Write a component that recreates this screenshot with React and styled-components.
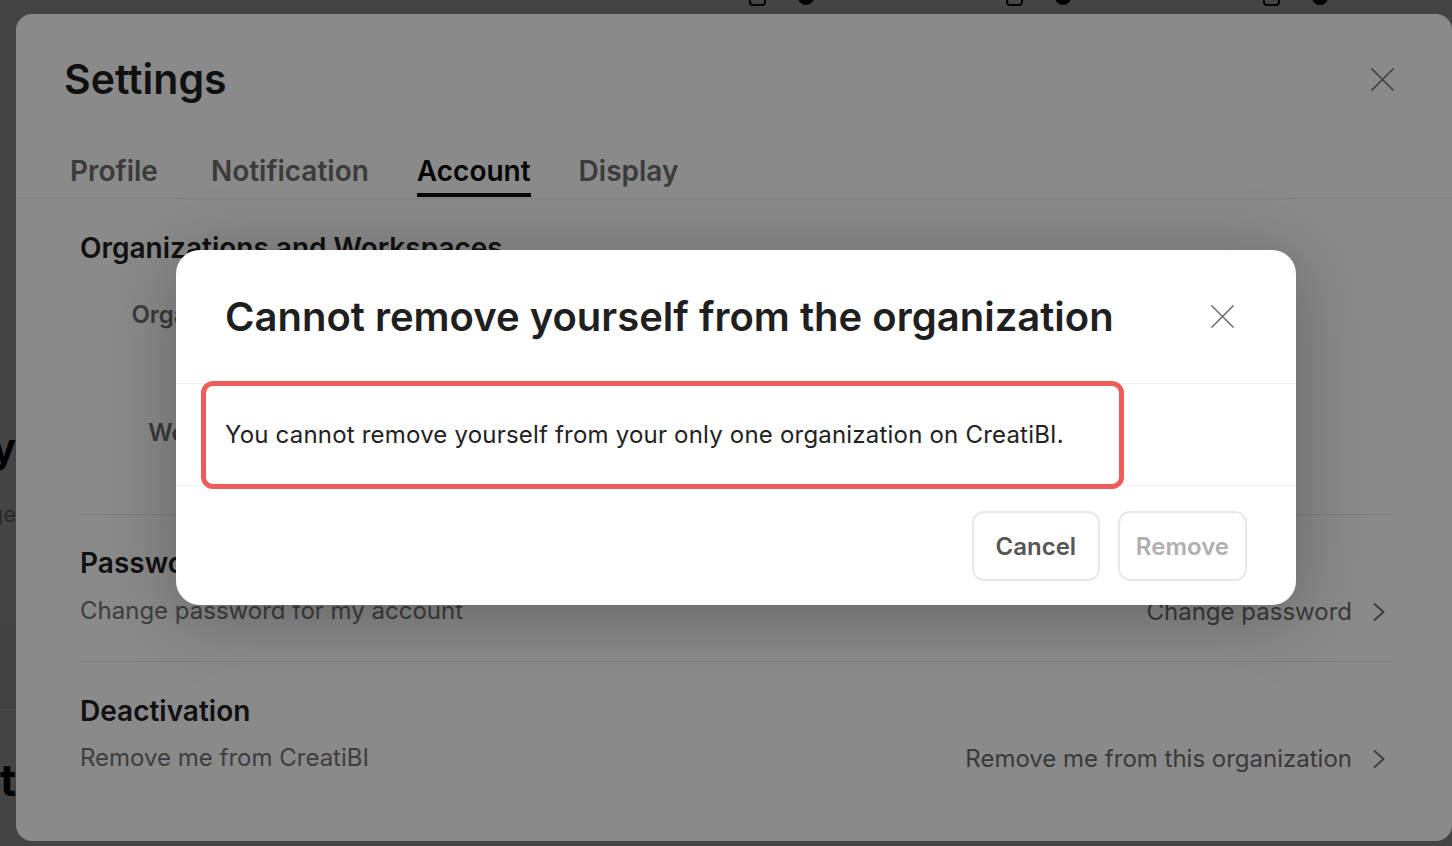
import React from "react";
import styled, { createGlobalStyle } from "styled-components";

const GlobalStyle = createGlobalStyle`
  * { box-sizing: border-box; }
  html, body { margin: 0; padding: 0; }
  body {
    font-family: Inter, "Noto Sans", "Liberation Sans", sans-serif;
    background: #fff;
    -webkit-font-smoothing: antialiased;
  }
`;

const Screen = styled.div`
  position: relative;
  width: 100vw;
  height: 100vh;
  overflow: hidden;
  background: #fff;
`;

/* ---------- app behind the settings window ---------- */

const BackApp = styled.div`
  display: flex;
  flex-direction: column;
  height: 100%;
`;

const TopBar = styled.div`
  display: flex;
  gap: 192px;
  height: 20px;
  margin-top: -13px;
  padding-left: 749px;
`;

const TopGroup = styled.div`
  display: flex;
  align-items: center;
  gap: 32px;
`;

const SquareIcon = styled.span`
  width: 17px;
  height: 17px;
  border: 2px solid #111;
  border-radius: 4px;
`;

const Avatar = styled.span`
  width: 16px;
  height: 16px;
  border-radius: 50%;
  background: #111;
`;

const SideColumn = styled.div`
  width: 16px;
  overflow: hidden;
  display: flex;
  flex-direction: column;
  padding-top: 417px;
`;

const BackLine = styled.div`
  display: flex;
  justify-content: flex-end;
  white-space: nowrap;
  font-size: ${(p) => p.$size}px;
  font-weight: ${(p) => p.$weight};
  color: ${(p) => p.$color};
  line-height: ${(p) => p.$lh}px;
  margin-top: ${(p) => p.$mt || 0}px;
`;

const BackBand = styled.div`
  height: 84px;
  margin-top: 96px;
  background: #f0f0f0;
  border-bottom: 1px solid #d6d6d6;
`;

/* ---------- overlays ---------- */

const Scrim = styled.div`
  position: absolute;
  inset: 0;
  background: rgba(0, 0, 0, ${(p) => p.$alpha});
`;

const Layer = styled.div`
  position: absolute;
  inset: 0;
  padding: ${(p) => (p.$center ? "14px 0 5px 20px" : "14px 0 5px 16px")};
  display: flex;
  align-items: ${(p) => (p.$center ? "center" : "stretch")};
  justify-content: ${(p) => (p.$center ? "center" : "stretch")};
`;

/* ---------- settings panel ---------- */

const Panel = styled.div`
  flex: 1;
  background: #fff;
  border-radius: 16px;
  display: flex;
  flex-direction: column;
  overflow: hidden;
`;

const PanelHeader = styled.div`
  display: flex;
  align-items: center;
  justify-content: space-between;
  padding: 41px 50px 0 48px;
`;

const PanelTitle = styled.h1`
  margin: 0;
  font-size: 41px;
  line-height: 48px;
  font-weight: 600;
  color: #1f1f1f;
`;

const IconButton = styled.button`
  display: flex;
  align-items: center;
  justify-content: center;
  width: ${(p) => p.$box}px;
  height: ${(p) => p.$box}px;
  padding: 0;
  border: 0;
  background: none;
  color: ${(p) => p.$color};
  cursor: pointer;
`;

const Tabs = styled.nav`
  display: flex;
  gap: 48px;
  margin-top: 51px;
  padding: 0 0 1px 54px;
  border-bottom: 1px solid #ededed;
`;

const Tab = styled.span`
  font-size: 28px;
  line-height: 34px;
  font-weight: 600;
  padding-bottom: 5px;
  color: ${(p) => (p.$active ? "#0a0a0a" : "#6d6d6d")};
  border-bottom: 4px solid ${(p) => (p.$active ? "#0a0a0a" : "transparent")};

  &:first-child {
    margin-right: 5px;
  }
`;

const Content = styled.div`
  display: flex;
  flex-direction: column;
  padding: 0 60px 0 64px;
`;

const Section = styled.section`
  display: flex;
  flex-direction: column;
  padding: ${(p) => p.$pad};
  border-bottom: ${(p) => (p.$last ? "none" : "1px solid #e8e8e8")};
`;

const Heading = styled.h2`
  margin: 0;
  font-size: 28px;
  line-height: 34px;
  font-weight: 600;
  color: #202020;
`;

const FieldRow = styled.div`
  display: grid;
  grid-template-columns: 200px 1fr;
  gap: 32px;
  align-items: center;
  height: 88px;
  margin-top: ${(p) => p.$mt}px;
`;

const FieldLabel = styled.span`
  text-align: right;
  font-size: 24px;
  font-weight: 600;
  color: #6b6b6b;
`;

const FieldValue = styled.div`
  display: flex;
  align-items: center;
  gap: 14px;
  font-size: 22px;
  color: #333;
`;

const OrgBadge = styled.span`
  width: 44px;
  height: 44px;
  border-radius: 10px;
  background: #3b6cf6;
  color: #fff;
  display: flex;
  align-items: center;
  justify-content: center;
  font-weight: 700;
`;

const DescRow = styled.div`
  display: flex;
  align-items: center;
  justify-content: space-between;
  margin-top: ${(p) => p.$mt}px;
`;

const Desc = styled.span`
  font-size: 24px;
  line-height: 30px;
  color: #737373;
`;

const Action = styled.a`
  display: flex;
  align-items: center;
  gap: 16px;
  font-size: 24px;
  line-height: 30px;
  color: #6b6b6b;
  text-decoration: none;
  cursor: pointer;
  transform: translateY(1px);
`;

/* ---------- confirmation dialog ---------- */

const Dialog = styled.div`
  position: relative;
  width: 1120px;
  background: #fff;
  border-radius: 24px;
  box-shadow: 0 10px 70px rgba(0, 0, 0, 0.28);
  display: flex;
  flex-direction: column;
`;

const DialogHeader = styled.div`
  display: flex;
  align-items: center;
  justify-content: space-between;
  height: 134px;
  padding: 0 48px 0 49px;
  border-bottom: 1px solid #f0f0f0;
`;

const DialogTitle = styled.h2`
  margin: 0;
  font-size: 40px;
  line-height: 48px;
  font-weight: 600;
  color: #1f1f1f;
`;

const DialogBody = styled.div`
  display: flex;
  align-items: center;
  height: 102px;
  padding: 0 49px;
  border-bottom: 1px solid #f0f0f0;
  font-size: 24px;
  letter-spacing: 0.2px;
  color: #222;
`;

const DialogFooter = styled.div`
  display: flex;
  justify-content: flex-end;
  gap: 18px;
  padding: 25px 49px 24px;
`;

const Button = styled.button`
  min-width: 128px;
  height: 70px;
  padding: 0 16px;
  border: 2px solid #e8e8e8;
  border-radius: 12px;
  background: #fff;
  font-family: inherit;
  font-size: 24px;
  font-weight: 600;
  color: ${(p) => (p.disabled ? "#b0b0b0" : "#555")};
  cursor: ${(p) => (p.disabled ? "default" : "pointer")};
`;

const Highlight = styled.div`
  position: absolute;
  left: 25px;
  top: 131px;
  width: 923px;
  height: 108px;
  border: 5px solid #f05d58;
  border-radius: 12px;
  pointer-events: none;
`;

const CloseIcon = ({ size = 24, stroke = 1.6 }) => (
  <svg width={size} height={size} viewBox="0 0 24 24" fill="none">
    <path d="M1 1L23 23M23 1L1 23" stroke="currentColor" strokeWidth={stroke} strokeLinecap="square" />
  </svg>
);

const Chevron = () => (
  <svg width="24" height="24" viewBox="0 0 24 24" fill="none">
    <path d="M6.5 4L15.5 12L6.5 20" stroke="currentColor" strokeWidth="1.8" strokeLinecap="round" strokeLinejoin="round" />
  </svg>
);

const tabs = ["Profile", "Notification", "Account", "Display"];

export default function App() {
  return (
    <Screen>
      <GlobalStyle />

      <BackApp>
        <TopBar>
          {[0, 1, 2].map((i) => (
            <TopGroup key={i}>
              <SquareIcon />
              <Avatar />
            </TopGroup>
          ))}
        </TopBar>
        <SideColumn>
          <BackLine $size={40} $weight={700} $color="#000" $lh={48}>
            Company
          </BackLine>
          <BackLine $size={22} $weight={400} $color="#9b9b9b" $lh={28} $mt={28}>
            Manage
          </BackLine>
          <BackBand />
          <BackLine $size={44} $weight={700} $color="#000" $lh={52} $mt={46}>
            Audit
          </BackLine>
        </SideColumn>
      </BackApp>

      <Scrim $alpha={0.5} />

      <Layer>
        <Panel>
          <PanelHeader>
            <PanelTitle>Settings</PanelTitle>
            <IconButton $box={40} $color="#7a7a7a" aria-label="Close settings">
              <CloseIcon size={23} stroke={1.7} />
            </IconButton>
          </PanelHeader>

          <Tabs>
            {tabs.map((t) => (
              <Tab key={t} $active={t === "Account"}>
                {t}
              </Tab>
            ))}
          </Tabs>

          <Content>
            <Section $pad="32px 0 38px">
              <Heading>Organizations and Workspaces</Heading>
              <FieldRow $mt={5}>
                <FieldLabel>Organization</FieldLabel>
                <FieldValue>
                  <OrgBadge>C</OrgBadge>
                  CreatiBI
                </FieldValue>
              </FieldRow>
              <FieldRow $mt={30}>
                <FieldLabel>Workspace</FieldLabel>
                <FieldValue>Default workspace</FieldValue>
              </FieldRow>
            </Section>

            <Section $pad="31px 0 35px">
              <Heading>Password</Heading>
              <DescRow $mt={16}>
                <Desc>Change password for my account</Desc>
                <Action>
                  Change password
                  <Chevron />
                </Action>
              </DescRow>
            </Section>

            <Section $pad="32px 0 0" $last>
              <Heading>Deactivation</Heading>
              <DescRow $mt={15}>
                <Desc>Remove me from CreatiBI</Desc>
                <Action>
                  Remove me from this organization
                  <Chevron />
                </Action>
              </DescRow>
            </Section>
          </Content>
        </Panel>
      </Layer>

      <Scrim $alpha={0.46} />

      <Layer $center>
        <Dialog role="dialog">
          <DialogHeader>
            <DialogTitle>Cannot remove yourself from the organization</DialogTitle>
            <IconButton $box={52} $color="#6f6f6f" aria-label="Close">
              <CloseIcon size={23} stroke={1.6} />
            </IconButton>
          </DialogHeader>
          <DialogBody>
            You cannot remove yourself from your only one organization on CreatiBI.
          </DialogBody>
          <DialogFooter>
            <Button>Cancel</Button>
            <Button disabled>Remove</Button>
          </DialogFooter>
          <Highlight />
        </Dialog>
      </Layer>
    </Screen>
  );
}
